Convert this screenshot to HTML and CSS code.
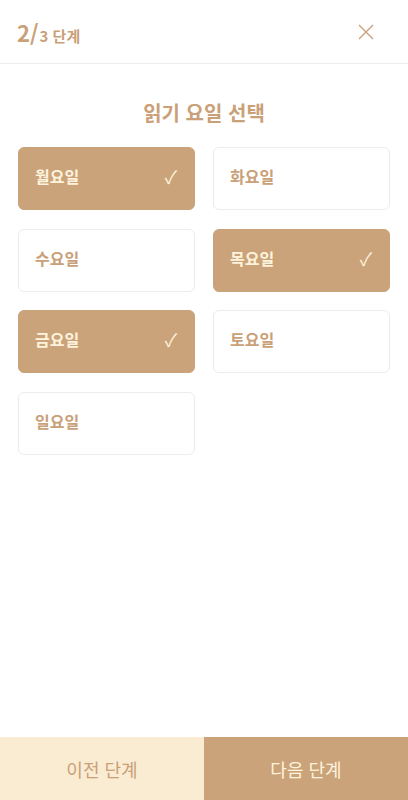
FILE: index.html
```html
<!DOCTYPE html>
<html lang="ko">
<head>
    <meta charset="UTF-8">
    <meta name="viewport" content="width=device-width, initial-scale=1.0">
    <title>읽기 요일 선택</title>
    <link rel="stylesheet" href="styles.css">
</head>
<body>
    <div class="page">
        <header class="top">
            <div class="step"><span class="step-now">2/</span><span class="step-total">3 단계</span></div>
            <button class="close" type="button" aria-label="닫기">
                <svg width="16" height="16" viewBox="0 0 16 16">
                    <path d="M1 1 L15 15 M15 1 L1 15" stroke="#c9a078" stroke-width="1.4" fill="none"/>
                </svg>
            </button>
        </header>

        <main class="content">
            <h2 class="title">읽기 요일 선택</h2>
            <div class="days">
                <div class="day selected"><span>월요일</span><span class="check">✓</span></div>
                <div class="day"><span>화요일</span></div>
                <div class="day"><span>수요일</span></div>
                <div class="day selected"><span>목요일</span><span class="check">✓</span></div>
                <div class="day selected"><span>금요일</span><span class="check">✓</span></div>
                <div class="day"><span>토요일</span></div>
                <div class="day"><span>일요일</span></div>
            </div>
        </main>

        <footer class="bottom">
            <button class="prev" type="button">이전 단계</button>
            <button class="next" type="button">다음 단계</button>
        </footer>
    </div>
</body>
</html>
```

FILE: styles.css
```css
* {
    box-sizing: border-box;
}
body {
    margin: 0;
    font-family: "Noto Sans CJK KR", "Noto Sans", sans-serif;
    background: #fff;
    color: #c9a078;
}
.page {
    height: 800px;
    display: flex;
    flex-direction: column;
}
.top {
    height: 64px;
    border-bottom: 1px solid #ececec;
    display: flex;
    align-items: center;
    justify-content: space-between;
    padding: 0 34px 0 17px;
}
.step {
    display: flex;
    align-items: baseline;
    font-weight: bold;
    color: #c9a078;
}
.step-now {
    font-size: 22px;
}
.step-total {
    font-size: 15px;
    margin-left: 1px;
}
.close {
    background: none;
    border: none;
    padding: 0;
    width: 16px;
    height: 16px;
    display: flex;
    cursor: pointer;
}
.content {
    flex: 1;
    padding: 0 18px;
}
.title {
    margin: 32px 0 18px;
    text-align: center;
    font-size: 20px;
    font-weight: bold;
    color: #c9a078;
    line-height: 33px;
}
.days {
    display: grid;
    grid-template-columns: 1fr 1fr;
    column-gap: 18px;
    row-gap: 18.5px;
}
.day {
    height: 63px;
    border: 1px solid #ececec;
    border-radius: 6px;
    display: flex;
    align-items: center;
    justify-content: space-between;
    padding: 0 17px 5px 16px;
    font-size: 16px;
    font-weight: bold;
    line-height: 20px;
    color: #c9a078;
}
.day.selected {
    background: #cba37a;
    border-color: #cba37a;
    color: #fdf3dc;
}
.check {
    font-weight: normal;
    font-size: 18px;
}
.bottom {
    display: flex;
    height: 63px;
}
.bottom button {
    flex: 1;
    border: none;
    font-family: inherit;
    font-size: 18px;
    cursor: pointer;
}
.prev {
    background: #f9ecd2;
    color: #c9a078;
}
.next {
    background: #cba37a;
    color: #fdf3dc;
}
```
